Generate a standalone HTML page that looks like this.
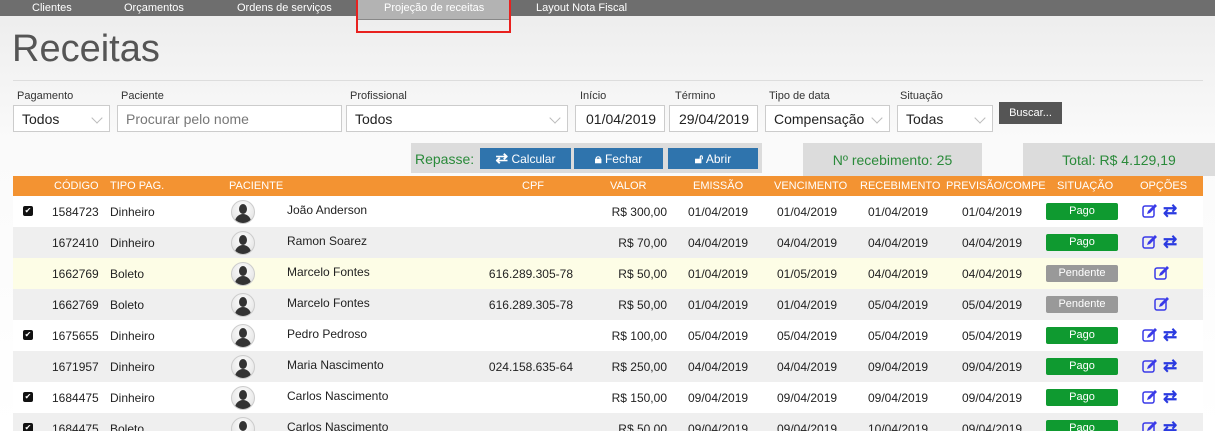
<!DOCTYPE html><html style="height:431px;overflow:hidden"><head><style>
body{margin:0;width:1215px;height:431px;overflow:hidden;font-family:"Liberation Sans",sans-serif;background:linear-gradient(#ececec,#fafafa 140px,#fff);position:relative;font-size:12px;color:#222}
.a{position:absolute}
.nav{left:0;top:0;width:1215px;height:16px;background:#6e6e6e}
.nav span{position:absolute;top:2px;color:#fff;font-size:11px}
.lbl{font-size:11px;color:#333}
.in{background:#fff;border:1px solid #ccc;height:27px;box-sizing:border-box;font-size:14px;line-height:26px;padding-left:8px;color:#222}
.chev{position:absolute;right:8px;top:8px;width:7px;height:7px;border-right:1.5px solid #bbb;border-bottom:1.5px solid #bbb;transform:rotate(45deg)}
.btn{background:#2f74ad;color:#fff;font-size:12px;text-align:center;line-height:21px;height:21px;top:148px}
.row{left:13px;width:1190px;height:31px}
.c{position:absolute;top:9px;font-size:12px;white-space:nowrap}
.r{text-align:right}
.h{position:absolute;top:4px;color:#fff;font-size:11px}
.badge{position:absolute;left:1033px;top:7px;width:72px;height:17px;border-radius:2px;color:#fff;font-size:11px;text-align:center;line-height:17px}
.av{position:absolute;left:218px;top:4px;width:22px;height:22px;border-radius:50%;background:radial-gradient(circle at 50% 35%,#fff,#ddd);overflow:hidden;border:1px solid #ccc}
.av:before{content:"";position:absolute;left:7px;top:3px;width:8px;height:10px;border-radius:50%;background:#333}
.av:after{content:"";position:absolute;left:3px;top:13px;width:16px;height:12px;border-radius:8px 8px 0 0;background:#333}
.ck{position:absolute;left:10px;top:10px;width:10px;height:10px;background:#111;border-radius:2px;color:#fff;font-size:8px;line-height:10px;text-align:center}
</style></head><body>
<div class="a nav"><span style="left:32px">Clientes</span><span style="left:124px">Orçamentos</span><span style="left:237px">Ordens de serviços</span><span style="left:536px">Layout Nota Fiscal</span></div>
<div class="a" style="left:356px;top:0;width:155px;height:33px;border:2px solid #e8211f;box-sizing:border-box;border-top:none"></div>
<div class="a" style="left:358px;top:0;width:151px;height:19px;background:#b3b3b3;border-bottom:1px solid #888"></div>
<div class="a" style="left:384px;top:2px;color:#fff;font-size:11px">Projeção de receitas</div>
<div class="a" style="left:12px;top:28px;font-size:38px;color:#555">Receitas</div>
<div class="a" style="left:13px;top:80px;width:1190px;height:1px;background:#ddd"></div>
<div class="a lbl" style="left:17px;top:90px">Pagamento</div>
<div class="a lbl" style="left:121px;top:90px">Paciente</div>
<div class="a lbl" style="left:350px;top:90px">Profissional</div>
<div class="a lbl" style="left:580px;top:90px">Início</div>
<div class="a lbl" style="left:675px;top:90px">Término</div>
<div class="a lbl" style="left:769px;top:90px">Tipo de data</div>
<div class="a lbl" style="left:900px;top:90px">Situação</div>
<div class="a in" style="left:13px;top:105px;width:97px">Todos<i class="chev"></i></div>
<div class="a in" style="left:117px;top:105px;width:225px;color:#777">Procurar pelo nome</div>
<div class="a in" style="left:346px;top:105px;width:222px">Todos<i class="chev"></i></div>
<div class="a in" style="left:575px;top:105px;width:90px;padding-left:10px">01/04/2019</div>
<div class="a in" style="left:669px;top:105px;width:89px;padding-left:9px">29/04/2019</div>
<div class="a in" style="left:765px;top:105px;width:125px">Compensação<i class="chev"></i></div>
<div class="a in" style="left:897px;top:105px;width:96px">Todas<i class="chev"></i></div>
<div class="a" style="left:999px;top:102px;width:63px;height:22px;background:#555;color:#fff;font-size:11px;text-align:center;line-height:22px">Buscar...</div>
<div class="a" style="left:411px;top:143px;width:351px;height:30px;background:#dcdcdc"></div>
<div class="a" style="left:415px;top:151px;color:#2a8a3a;font-size:14px">Repasse:</div>
<div class="a btn" style="left:480px;width:91px"><b style="font-size:15px">⇄</b> Calcular</div>
<div class="a btn" style="left:574px;width:89px"><b style="font-size:13px">🔒︎</b> Fechar</div>
<div class="a btn" style="left:668px;width:90px"><b style="font-size:13px">🔓︎</b> Abrir</div>
<div class="a" style="left:803px;top:143px;width:179px;height:33px;background:#dcdcdc;color:#2a8a3a;font-size:14px;text-align:center;line-height:34px">Nº recebimento: 25</div>
<div class="a" style="left:1023px;top:143px;width:192px;height:33px;background:#dcdcdc;color:#2a8a3a;font-size:14px;text-align:center;line-height:34px">Total: R$ 4.129,19</div>
<div class="a" style="left:13px;top:176px;width:1190px;height:20px;background:#f39332">
<span class="h" style="left:41px">CÓDIGO</span><span class="h" style="left:97px">TIPO PAG.</span><span class="h" style="left:216px">PACIENTE</span><span class="h" style="left:509px">CPF</span><span class="h" style="left:597px">VALOR</span><span class="h" style="left:680px">EMISSÃO</span><span class="h" style="left:761px">VENCIMENTO</span><span class="h" style="left:847px">RECEBIMENTO</span><span class="h" style="left:933px">PREVISÃO/COMPE</span><span class="h" style="left:1044px">SITUAÇÃO</span><span class="h" style="left:1127px">OPÇÕES</span></div>
<div id="rows"></div>
<script>
var d=[[1,"1584723","Dinheiro","João Anderson","","R$ 300,00","01/04/2019","01/04/2019","01/04/2019","01/04/2019",1,"#fff"],
[0,"1672410","Dinheiro","Ramon Soarez","","R$ 70,00","04/04/2019","04/04/2019","04/04/2019","04/04/2019",1,"#efefef"],
[0,"1662769","Boleto","Marcelo Fontes","616.289.305-78","R$ 50,00","01/04/2019","01/05/2019","04/04/2019","04/04/2019",0,"#fdfde6"],
[0,"1662769","Boleto","Marcelo Fontes","616.289.305-78","R$ 50,00","01/04/2019","01/04/2019","05/04/2019","05/04/2019",0,"#efefef"],
[1,"1675655","Dinheiro","Pedro Pedroso","","R$ 100,00","05/04/2019","05/04/2019","05/04/2019","05/04/2019",1,"#fff"],
[0,"1671957","Dinheiro","Maria Nascimento","024.158.635-64","R$ 250,00","04/04/2019","04/04/2019","09/04/2019","09/04/2019",1,"#efefef"],
[1,"1684475","Dinheiro","Carlos Nascimento","","R$ 150,00","09/04/2019","09/04/2019","09/04/2019","09/04/2019",1,"#fff"],
[1,"1684475","Boleto","Carlos Nascimento","","R$ 50,00","09/04/2019","09/04/2019","10/04/2019","09/04/2019",1,"#efefef"]];
var edit='<svg width="16" height="14" viewBox="0 0 16 14" style="position:absolute;top:8px;left:LL"><rect x="1" y="2" width="11" height="11" rx="2" fill="none" stroke="#3a3ae8" stroke-width="1.5"/><path d="M5 10 L6 7 L13 0 L15 2 L8 9 Z" fill="#3a3ae8"/></svg>';
var arr='<span style="position:absolute;left:1150px;top:5px;color:#2a3ae0;font-size:17px;font-weight:bold">⇄</span>';
var h="";d.forEach(function(r,i){var t=196+i*31;
h+='<div class="a row" style="top:'+t+'px;background:'+r[11]+'">'+(r[0]?'<div class="ck">✔</div>':'')+
'<span class="c" style="left:39px">'+r[1]+'</span><span class="c" style="left:97px">'+r[2]+'</span><div class="av"></div><span class="c" style="left:274px;top:7px">'+r[3]+'</span>'+
'<span class="c r" style="right:630px">'+r[4]+'</span><span class="c r" style="right:536px">'+r[5]+'</span>'+
'<span class="c" style="left:675px">'+r[6]+'</span><span class="c" style="left:764px">'+r[7]+'</span><span class="c" style="left:855px">'+r[8]+'</span><span class="c" style="left:949px">'+r[9]+'</span>'+
'<div class="badge" style="background:'+(r[10]?'#0f9a30':'#999')+'">'+(r[10]?'Pago':'Pendente')+'</div>'+
(r[10]?edit.replace('LL','1129px')+arr:edit.replace('LL','1141px'))+'</div>';});
document.getElementById("rows").innerHTML=h;
</script>
</body></html>
